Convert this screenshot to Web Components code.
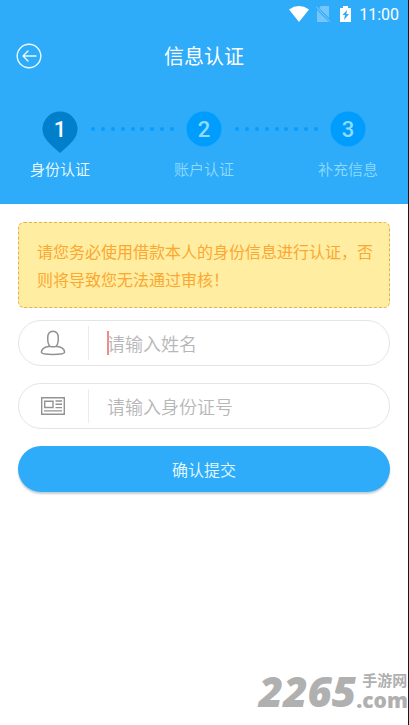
<!DOCTYPE html>
<html lang="zh-CN">
<head>
<meta charset="utf-8">
<meta name="viewport" content="width=device-width, initial-scale=1">
<title>信息认证</title>
<style>
body { margin: 0; background: #fff; font-family: "Noto Sans CJK SC", sans-serif; font-weight: 350; }
</style>
</head>
<body>
<verify-page></verify-page>
<script>
const define = (name, html, setup) => {
  const template = document.createElement('template');
  template.innerHTML = '<style>*{box-sizing:border-box}:host{box-sizing:border-box}</style>' + html;
  customElements.define(name, class extends HTMLElement {
    constructor() {
      super();
      this.attachShadow({ mode: 'open' }).append(template.content.cloneNode(true));
    }
    connectedCallback() { if (setup) setup(this, this.shadowRoot); }
  });
};

define('status-bar', `
<style>
:host { display: flex; justify-content: flex-end; align-items: center; height: 30px; padding: 0 9px; color: #fff; font: 16px/20px Roboto, sans-serif; }
svg { display: block; margin-bottom: 2px; }
.wifi { margin-right: 7px; }
.sim { margin-right: 9px; }
.battery { margin-right: 7px; }
</style>
<svg class="wifi" width="20" height="16" viewBox="0 0 20 16" fill="#fff"><path d="M0 3.4Q10-3.4 20 3.4L10 16Z"/></svg>
<svg class="sim" width="15" height="16" viewBox="0 0 15 16"><path d="M5 0H13V16H1V4Z" fill="#75c6fc"/><path d="M0 1L15 16" stroke="#2eabf9" stroke-width="3"/><path d="M0 0.5L14 15.5" stroke="#83cbfc" stroke-width="1"/></svg>
<svg class="battery" width="12" height="16" viewBox="0 0 12 16"><path d="M3 0H8V2H11V16H0V2H3Z" fill="#fff"/><path d="M7 4L2.5 9H5L4 14L9 8H6.4Z" fill="#2eabf9"/></svg>
<span>11:00</span>`);

define('title-bar', `
<style>
:host { display: grid; grid-template-columns: 60px 1fr 60px; align-items: center; height: 52px; color: #fff; }
button { width: 26px; height: 26px; margin-left: 16px; padding: 0; border: 0; background: none; }
svg { display: block; }
h1 { margin: 0; text-align: center; font-size: 20px; line-height: 30px; font-weight: 400; }
</style>
<button type="button" aria-label="返回"><svg width="26" height="26" viewBox="0 0 26 26" fill="none" stroke="#e8fbff" stroke-width="1.4"><circle cx="13" cy="13" r="11.8"/><path d="M20 13H7M12 8L7 13L12 18" stroke-linecap="round" stroke-linejoin="round"/></svg></button>
<h1><slot></slot></h1>`);

define('step-item', `
<style>
:host { display: flex; flex-direction: column; align-items: center; width: 60px; color: #8fdcfd; }
:host([active]) { color: #f0fdff; }
.mark { display: grid; width: 36px; height: 42px; }
.mark > * { grid-area: 1 / 1; }
.num { height: 36px; text-align: center; font: 500 22px/38px Roboto, sans-serif; }
.round { fill: #019dfe; }
.pin { fill: #027fcb; display: none; }
:host([active]) .round { display: none; }
:host([active]) .pin { display: block; }
.label { margin-top: 6px; font-size: 15px; line-height: 20px; white-space: nowrap; }
</style>
<div class="mark">
<svg width="36" height="42" viewBox="0 0 36 42"><circle class="round" cx="18" cy="18" r="17.5"/><path class="pin" d="M18 .5A17.5 17.5 0 0 1 35.5 18C35.5 27 29 32.5 18 42C7 32.5 .5 27 .5 18A17.5 17.5 0 0 1 18 .5Z"/></svg>
<span class="num"></span>
</div>
<span class="label"><slot></slot></span>`, (el, root) => {
  root.querySelector('.num').textContent = el.getAttribute('number');
});

define('step-dots', `
<style>
:host { display: flex; flex: 1; justify-content: space-between; padding: 0 0 0 1px; margin-top: 16px; }
i { width: 4px; height: 4px; border-radius: 50%; background: #079dfc; }
</style><i></i><i></i><i></i><i></i><i></i><i></i><i></i><i></i><i></i>`);

define('step-track', `
<style>:host { display: flex; align-items: flex-start; padding: 29px 30px 25px; }</style><slot></slot>`);

define('notice-box', `
<style>
:host { display: block; padding: 14px 14px 14px 18px; border: 1px dashed #e5b04f; border-radius: 6px; background: #ffeea1; color: #fba731; font-size: 16px; line-height: 28px; font-weight: 400; }
</style><slot></slot>`);

define('icon-field', `
<style>
:host { display: block; }
label { display: flex; align-items: center; height: 46px; border: 1px solid #e4e4e4; border-radius: 23px; background: #fff; }
.icon { display: flex; justify-content: center; align-items: center; width: 70px; height: 34px; padding-right: 2px; border-right: 1px solid #ececec; margin-right: 18px; }
input { flex: 1; min-width: 0; height: 36px; margin: 0 20px 0 0; padding: 0; border: 0; outline: 0; background: none; color: #555; font: inherit; font-size: 18px; line-height: 28px; caret-color: #ef6a70; }
input::placeholder { color: #b7b7b7; opacity: 1; }
.caret { display: none; width: 2px; height: 24px; margin-right: -2px; background: #f28a8d; }
:host([current]) .caret { display: block; }
</style>
<label><span class="icon"><slot></slot></span><span class="caret"></span><input type="text"></label>`, (el, root) => {
  const input = root.querySelector('input');
  input.placeholder = el.getAttribute('hint');
  input.setAttribute('aria-label', el.getAttribute('label'));
});

define('submit-button', `
<style>
:host { display: block; }
button { display: block; width: 100%; height: 46px; padding: 0; border: 0; border-radius: 23px; background: #2eabf9; box-shadow: 0 2px 2px #c4cdd4; color: #e6fbff; font: inherit; font-size: 16px; line-height: 24px; }
</style><button type="submit"><slot></slot></button>`);

define('site-mark', `
<style>
:host { display: flex; align-items: center; color: #b0b0b0; white-space: nowrap; }
.digits { font: italic 800 42px/44px "Open Sans", sans-serif; }
.side { display: flex; flex-direction: column; }
.cn { padding-left: 6px; font-size: 15px; line-height: 18px; font-weight: 700; }
.com { font: 800 21px/22px "Open Sans", sans-serif; }
</style>
<span class="digits">2265</span><span class="side"><span class="cn">手游网</span><span class="com">.com</span></span>`);

define('verify-page', `
<style>
:host { display: block; position: relative; min-height: 100vh; border-right: 1px solid #16191c; background: #fff; }
header { background: #2eabf9; }
form { display: flex; flex-direction: column; gap: 17px; padding: 18px; }
notice-box { margin-bottom: -5px; }
svg { display: block; }
site-mark { position: absolute; right: 0; bottom: 12px; }
</style>
<header>
<status-bar></status-bar>
<title-bar>信息认证</title-bar>
<step-track>
<step-item number="1" active>身份认证</step-item><step-dots></step-dots>
<step-item number="2">账户认证</step-item><step-dots></step-dots>
<step-item number="3">补充信息</step-item>
</step-track>
</header>
<form>
<notice-box>请您务必使用借款本人的身份信息进行认证，否则将导致您无法通过审核！</notice-box>
<icon-field current label="姓名" hint="请输入姓名"><svg width="26" height="26" viewBox="0 0 26 26" fill="none" stroke="#929292" stroke-width="1.5"><path d="M9.8 16.2C8.2 14.6 7.7 12 7.7 8C7.7 3.5 9.5 1.2 13 1.2S18.3 3.5 18.3 8C18.3 12 17.8 14.6 16.2 16.2C21 16.8 24.6 19 24.6 22.3C24.6 23.6 19 24.4 13 24.4S1.4 23.6 1.4 22.3C1.4 19 5 16.8 9.8 16.2ZM9.8 16.2Q13 17.4 16.2 16.2"/></svg></icon-field>
<icon-field label="身份证号" hint="请输入身份证号"><svg width="24" height="18" viewBox="0 0 24 18" fill="none" stroke="#929292" stroke-width="1.4"><path d="M.7 .7H23.3V17.3H.7ZM3.7 4.2H12V10.5H3.7ZM14.5 4H21M14.5 7.3H21M14.5 10.6H21M3 13.9H21"/></svg></icon-field>
<submit-button>确认提交</submit-button>
</form>
<site-mark></site-mark>`);
</script>
</body>
</html>
